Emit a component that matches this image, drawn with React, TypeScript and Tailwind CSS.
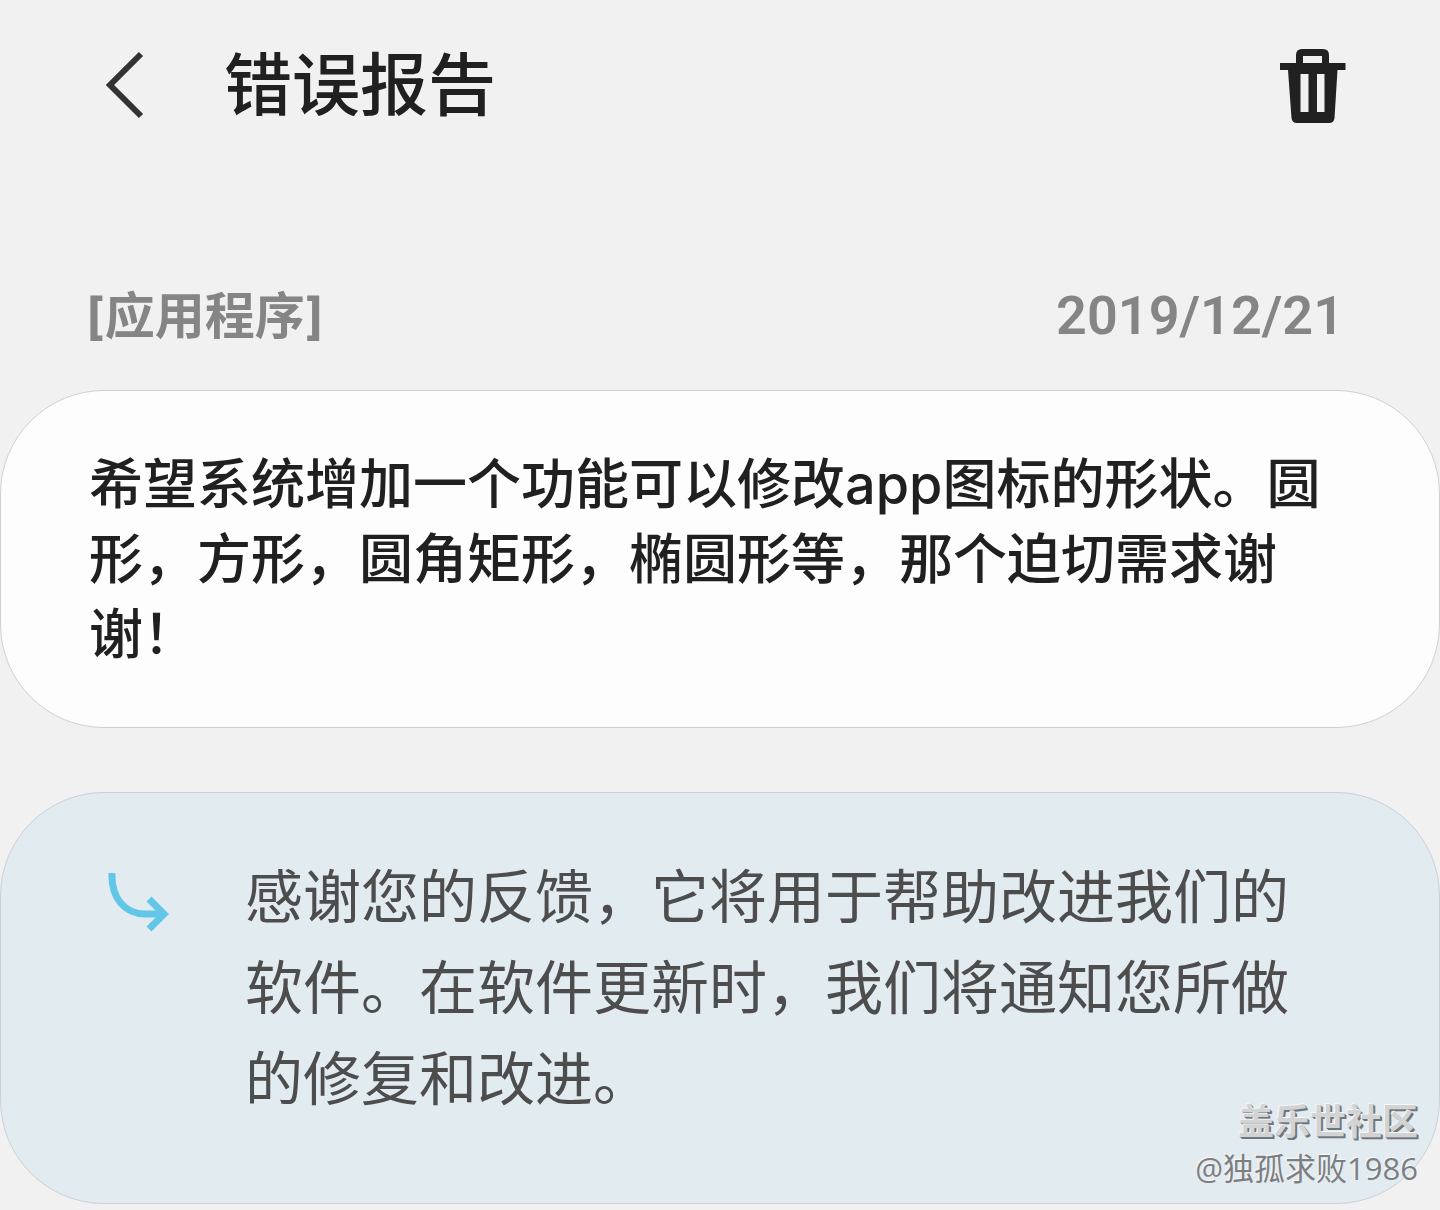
function BackIcon() {
  return (
    <svg width="40" height="68" viewBox="0 0 40 68" fill="none" stroke="#333" strokeWidth="6" aria-hidden="true">
      <path d="M37 3 L6 34 L37 65" />
    </svg>
  );
}

function TrashIcon() {
  return (
    <svg width="66" height="78" viewBox="0 -3 66 78" fill="#212121" fillRule="evenodd" aria-hidden="true">
      <path d="M16 14V6Q16 0 22 0H43Q49 0 49 6V14H65.500V21H57.500L54.500 69Q54 74 49 74H17Q12 74 11.500 69L8 21H0V14ZM23 7V14H42V7ZM20.500 25V63H28.500V25ZM37 25V63H44.500V25Z" />
    </svg>
  );
}

function ReplyArrowIcon() {
  return (
    <svg width="64" height="60" viewBox="0 0 64 60" fill="none" stroke="#62c6e8" strokeWidth="7" aria-hidden="true">
      <path d="M5 0 C4 25 18 41 38 41 H57" />
      <path d="M42 26 L57 41 L42 56" />
    </svg>
  );
}

export default function App() {
  return (
    <main className="relative min-h-screen bg-[#f1f1f1] pb-[6px] font-['Inter','Noto_Sans_CJK_SC',sans-serif] text-[#202020]">
      <header className="flex h-[170px] items-center px-[88px]">
        <button type="button" aria-label="返回" className="flex w-[72px] justify-center">
          <BackIcon />
        </button>
        <h1 className="ml-16 text-[68px] font-medium leading-[96px]">错误报告</h1>
        <button type="button" aria-label="删除" className="ml-auto mr-[6px]">
          <TrashIcon />
        </button>
      </header>
      <div className="mt-[110px] flex justify-between pr-24 pl-[86px] leading-[72px] text-[#858585]">
        <p className="text-[50px] font-bold">[应用程序]</p>
        <time dateTime="2019-12-21" className="font-['Roboto',sans-serif] text-[54px] font-semibold">
          2019/12/21
        </time>
      </div>
      <section className="mt-[38px] rounded-[104px] border border-[#d0d0d0] bg-[#fdfdfd] pt-[56px] pr-[100px] pb-[55px] pl-[88px]">
        <p className="text-[54px] font-medium leading-[75px]">
          希望系统增加一个功能可以修改app图标的形状。圆形，方形，圆角矩形，椭圆形等，那个迫切需求谢谢！
        </p>
      </section>
      <section className="mt-[64px] flex items-start rounded-[104px] border border-[#ccd1d3] bg-[#e2ebf0] pt-[59px] pr-[140px] pb-[78px] pl-[106px]">
        <div className="mt-[21px] w-[138px] shrink-0">
          <ReplyArrowIcon />
        </div>
        <p className="text-[58px] leading-[91px] text-[#4d4d4d]">
          感谢您的反馈，它将用于帮助改进我们的软件。在软件更新时，我们将通知您所做的修复和改进。
        </p>
      </section>
      <div className="absolute right-[22px] bottom-[20px] text-right font-['Open_Sans','Noto_Sans_CJK_SC',sans-serif] text-[#d2d3d4] [text-shadow:-1px_-1px_0_#f5f7f8,1px_1px_0_#737679,2px_2px_0_#737679]">
        <p className="text-[36px] font-bold leading-[48px]">盖乐世社区</p>
        <p className="text-[31px] leading-[44px] text-[#7c7f82] [text-shadow:-1px_-1px_0_#f5f7f8,-2px_-2px_0_#e8ecee]">@独孤求败1986</p>
      </div>
    </main>
  );
}
